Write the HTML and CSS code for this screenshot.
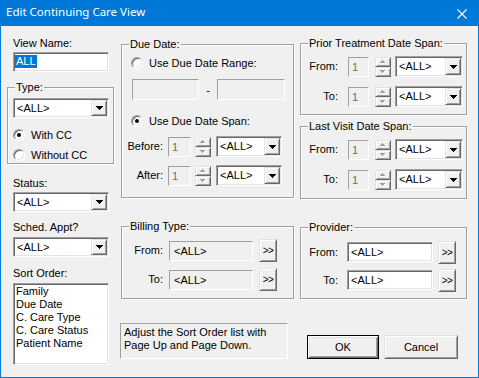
FILE: index.html
```html
<!DOCTYPE html>
<html>
<head>
<meta charset="utf-8">
<link rel="stylesheet" href="styles.css">
</head>
<body>
<div class="window">
  <div class="titlebar">
    <span class="title">Edit Continuing Care View</span>
    <svg class="close" width="10" height="10" viewBox="0 0 10 10"><path d="M0.5 0.5L9.5 9.5M9.5 0.5L0.5 9.5" stroke="#fff" stroke-width="1.1" fill="none"/></svg>
  </div>
  <div class="client">
    <!-- LEFT COLUMN -->
    <div class="col col-left">
      <div class="lbl lbl-view">View Name:</div>
      <div class="edit sunken name-edit"><span class="sel">ALL</span></div>
      <div class="group g-type">
        <span class="glabel">Type:</span>
        <div class="combo combo-left type-combo"><span class="ctext">&lt;ALL&gt;</span><span class="cbtn"><svg width="7" height="4" viewBox="0 0 7 4"><path d="M0 0h7v1h-1v1h-1v1h-1v1h-1v-1h-1v-1h-1v-1h-1z"/></svg></span></div>
        <div class="radio radio-with"><span class="rc on"></span><span>With CC</span></div>
        <div class="radio radio-without"><span class="rc"></span><span>Without CC</span></div>
      </div>
      <div class="lbl lbl-status">Status:</div>
      <div class="combo combo-left status-combo"><span class="ctext">&lt;ALL&gt;</span><span class="cbtn"><svg width="7" height="4" viewBox="0 0 7 4"><path d="M0 0h7v1h-1v1h-1v1h-1v1h-1v-1h-1v-1h-1v-1h-1z"/></svg></span></div>
      <div class="lbl lbl-sched">Sched. Appt?</div>
      <div class="combo combo-left sched-combo"><span class="ctext">&lt;ALL&gt;</span><span class="cbtn"><svg width="7" height="4" viewBox="0 0 7 4"><path d="M0 0h7v1h-1v1h-1v1h-1v1h-1v-1h-1v-1h-1v-1h-1z"/></svg></span></div>
      <div class="lbl lbl-sort">Sort Order:</div>
      <div class="listbox sunken">
        <div>Family</div>
        <div>Due Date</div>
        <div>C. Care Type</div>
        <div>C. Care Status</div>
        <div>Patient Name</div>
      </div>
    </div>

    <!-- MIDDLE COLUMN -->
    <div class="col col-mid">
      <div class="group g-due">
        <span class="glabel">Due Date:</span>
        <div class="radio radio-range"><span class="rc"></span><span>Use Due Date Range:</span></div>
        <div class="row range-row">
          <div class="edit flat range-edit1"></div>
          <span class="dash">-</span>
          <div class="edit flat range-edit2"></div>
        </div>
        <div class="radio radio-span"><span class="rc on"></span><span>Use Due Date Span:</span></div>
        <div class="row span-row span-row1">
          <span class="rlbl mid-lbl">Before:</span>
          <div class="edit flat num-edit mid-num"><span class="dis">1</span></div>
          <div class="spin mid-spin">
            <span class="sbtn"><svg width="6" height="4" viewBox="0 0 6 4"><path fill="#fff" d="M3 1h1v1h1v1h1v1h-5v-1h1v-1h1z"/><path fill="#a0a0a0" d="M2 0h1v1h1v1h1v1h-5v-1h1v-1h1z"/></svg></span>
            <span class="sbtn"><svg width="6" height="4" viewBox="0 0 6 4"><path fill="#fff" d="M1 1h5v1h-1v1h-1v1h-1v-1h-1v-1h-1z"/><path fill="#a0a0a0" d="M0 0h5v1h-1v1h-1v1h-1v-1h-1v-1h-1z"/></svg></span>
          </div>
          <div class="combo mid-combo"><span class="ctext">&lt;ALL&gt;</span><span class="cbtn"><svg width="7" height="4" viewBox="0 0 7 4"><path d="M0 0h7v1h-1v1h-1v1h-1v1h-1v-1h-1v-1h-1v-1h-1z"/></svg></span></div>
        </div>
        <div class="row span-row span-row2">
          <span class="rlbl mid-lbl">After:</span>
          <div class="edit flat num-edit mid-num"><span class="dis">1</span></div>
          <div class="spin mid-spin">
            <span class="sbtn"><svg width="6" height="4" viewBox="0 0 6 4"><path fill="#fff" d="M3 1h1v1h1v1h1v1h-5v-1h1v-1h1z"/><path fill="#a0a0a0" d="M2 0h1v1h1v1h1v1h-5v-1h1v-1h1z"/></svg></span>
            <span class="sbtn"><svg width="6" height="4" viewBox="0 0 6 4"><path fill="#fff" d="M1 1h5v1h-1v1h-1v1h-1v-1h-1v-1h-1z"/><path fill="#a0a0a0" d="M0 0h5v1h-1v1h-1v1h-1v-1h-1v-1h-1z"/></svg></span>
          </div>
          <div class="combo mid-combo"><span class="ctext">&lt;ALL&gt;</span><span class="cbtn"><svg width="7" height="4" viewBox="0 0 7 4"><path d="M0 0h7v1h-1v1h-1v1h-1v1h-1v-1h-1v-1h-1v-1h-1z"/></svg></span></div>
        </div>
      </div>

      <div class="group g-billing">
        <span class="glabel">Billing Type:</span>
        <div class="row pick-row pick-row1">
          <span class="rlbl mid-lbl">From:</span>
          <div class="edit flat bill-edit"><span>&lt;ALL&gt;</span></div>
          <span class="btn small-btn">&gt;&gt;</span>
        </div>
        <div class="row pick-row pick-row2">
          <span class="rlbl mid-lbl">To:</span>
          <div class="edit flat bill-edit"><span>&lt;ALL&gt;</span></div>
          <span class="btn small-btn">&gt;&gt;</span>
        </div>
      </div>

      <div class="info">Adjust the Sort Order list with<br>Page Up and Page Down.</div>
    </div>

    <!-- RIGHT COLUMN -->
    <div class="col col-right">
      <div class="group g-prior">
        <span class="glabel">Prior Treatment Date Span:</span>
        <div class="row span-row rspan-row1">
          <span class="rlbl right-lbl">From:</span>
          <div class="edit flat num-edit right-num"><span class="dis">1</span></div>
          <div class="spin right-spin">
            <span class="sbtn"><svg width="6" height="4" viewBox="0 0 6 4"><path fill="#fff" d="M3 1h1v1h1v1h1v1h-5v-1h1v-1h1z"/><path fill="#a0a0a0" d="M2 0h1v1h1v1h1v1h-5v-1h1v-1h1z"/></svg></span>
            <span class="sbtn"><svg width="6" height="4" viewBox="0 0 6 4"><path fill="#fff" d="M1 1h5v1h-1v1h-1v1h-1v-1h-1v-1h-1z"/><path fill="#a0a0a0" d="M0 0h5v1h-1v1h-1v1h-1v-1h-1v-1h-1z"/></svg></span>
          </div>
          <div class="combo right-combo"><span class="ctext">&lt;ALL&gt;</span><span class="cbtn"><svg width="7" height="4" viewBox="0 0 7 4"><path d="M0 0h7v1h-1v1h-1v1h-1v1h-1v-1h-1v-1h-1v-1h-1z"/></svg></span></div>
        </div>
        <div class="row span-row rspan-row2">
          <span class="rlbl right-lbl">To:</span>
          <div class="edit flat num-edit right-num"><span class="dis">1</span></div>
          <div class="spin right-spin">
            <span class="sbtn"><svg width="6" height="4" viewBox="0 0 6 4"><path fill="#fff" d="M3 1h1v1h1v1h1v1h-5v-1h1v-1h1z"/><path fill="#a0a0a0" d="M2 0h1v1h1v1h1v1h-5v-1h1v-1h1z"/></svg></span>
            <span class="sbtn"><svg width="6" height="4" viewBox="0 0 6 4"><path fill="#fff" d="M1 1h5v1h-1v1h-1v1h-1v-1h-1v-1h-1z"/><path fill="#a0a0a0" d="M0 0h5v1h-1v1h-1v1h-1v-1h-1v-1h-1z"/></svg></span>
          </div>
          <div class="combo right-combo"><span class="ctext">&lt;ALL&gt;</span><span class="cbtn"><svg width="7" height="4" viewBox="0 0 7 4"><path d="M0 0h7v1h-1v1h-1v1h-1v1h-1v-1h-1v-1h-1v-1h-1z"/></svg></span></div>
        </div>
      </div>

      <div class="group g-last">
        <span class="glabel">Last Visit Date Span:</span>
        <div class="row span-row rspan-row1">
          <span class="rlbl right-lbl">From:</span>
          <div class="edit flat num-edit right-num"><span class="dis">1</span></div>
          <div class="spin right-spin">
            <span class="sbtn"><svg width="6" height="4" viewBox="0 0 6 4"><path fill="#fff" d="M3 1h1v1h1v1h1v1h-5v-1h1v-1h1z"/><path fill="#a0a0a0" d="M2 0h1v1h1v1h1v1h-5v-1h1v-1h1z"/></svg></span>
            <span class="sbtn"><svg width="6" height="4" viewBox="0 0 6 4"><path fill="#fff" d="M1 1h5v1h-1v1h-1v1h-1v-1h-1v-1h-1z"/><path fill="#a0a0a0" d="M0 0h5v1h-1v1h-1v1h-1v-1h-1v-1h-1z"/></svg></span>
          </div>
          <div class="combo right-combo"><span class="ctext">&lt;ALL&gt;</span><span class="cbtn"><svg width="7" height="4" viewBox="0 0 7 4"><path d="M0 0h7v1h-1v1h-1v1h-1v1h-1v-1h-1v-1h-1v-1h-1z"/></svg></span></div>
        </div>
        <div class="row span-row rspan-row2">
          <span class="rlbl right-lbl">To:</span>
          <div class="edit flat num-edit right-num"><span class="dis">1</span></div>
          <div class="spin right-spin">
            <span class="sbtn"><svg width="6" height="4" viewBox="0 0 6 4"><path fill="#fff" d="M3 1h1v1h1v1h1v1h-5v-1h1v-1h1z"/><path fill="#a0a0a0" d="M2 0h1v1h1v1h1v1h-5v-1h1v-1h1z"/></svg></span>
            <span class="sbtn"><svg width="6" height="4" viewBox="0 0 6 4"><path fill="#fff" d="M1 1h5v1h-1v1h-1v1h-1v-1h-1v-1h-1z"/><path fill="#a0a0a0" d="M0 0h5v1h-1v1h-1v1h-1v-1h-1v-1h-1z"/></svg></span>
          </div>
          <div class="combo right-combo"><span class="ctext">&lt;ALL&gt;</span><span class="cbtn"><svg width="7" height="4" viewBox="0 0 7 4"><path d="M0 0h7v1h-1v1h-1v1h-1v1h-1v-1h-1v-1h-1v-1h-1z"/></svg></span></div>
        </div>
      </div>

      <div class="group g-provider">
        <span class="glabel">Provider:</span>
        <div class="row pick-row prov-row1">
          <span class="rlbl right-lbl">From:</span>
          <div class="edit sunken prov-edit"><span>&lt;ALL&gt;</span></div>
          <span class="btn small-btn prov-btn">&gt;&gt;</span>
        </div>
        <div class="row pick-row prov-row2">
          <span class="rlbl right-lbl">To:</span>
          <div class="edit sunken prov-edit"><span>&lt;ALL&gt;</span></div>
          <span class="btn small-btn prov-btn">&gt;&gt;</span>
        </div>
      </div>

      <div class="row dlg-buttons">
        <span class="btn default-btn ok-btn">OK</span>
        <span class="btn cancel-btn">Cancel</span>
      </div>
    </div>
  </div>
</div>
</body>
</html>
```

FILE: styles.css
```css
* { box-sizing: border-box; }

body {
  margin: 0;
  font-family: "Liberation Sans", Arial, sans-serif;
  font-size: 11px;
  line-height: 13px;
  color: #000;
}

.window {
  width: 479px;
  height: 378px;
  background: #0078d7;
  padding: 0 1px 1px;
  display: flex;
  flex-direction: column;
}

.titlebar {
  height: 26px;
  flex: none;
  display: flex;
  align-items: flex-start;
  padding: 4px 0 0 5px;
  color: #fff;
  font-family: "Noto Sans", sans-serif;
  font-size: 11.5px;
  line-height: 16px;
}
.title { flex: 1; }
.close { margin: 5px 11px 0 0; }

.client {
  flex: 1;
  background: #f0f0f0;
  display: flex;
  align-items: flex-start;
}

.col { display: flex; flex-direction: column; align-items: flex-start; }
.col-left { margin-left: 6px; width: 107px; }
.col-mid { margin-left: 6px; width: 174px; }
.col-right { margin-left: 6px; width: 167px; }

.row { display: flex; align-items: flex-start; }

/* ---------- basic controls ---------- */
.lbl { margin-left: 6px; height: 13px; white-space: nowrap; }

.sunken {
  background: #fff;
  border: 1px solid;
  border-color: #a0a0a0 #fff #fff #a0a0a0;
  box-shadow: inset 1px 1px 0 #696969, inset -1px -1px 0 #e3e3e3;
}

.flat {
  background: #f0f0f0;
  border: 1px solid;
  border-color: #a0a0a0 #fff #fff #a0a0a0;
}

.edit {
  display: flex;
  align-items: center;
  white-space: nowrap;
}

.combo {
  display: flex;
  background: #fff;
  border: 1px solid;
  border-color: #a0a0a0 #fff #fff #a0a0a0;
  box-shadow: inset 1px 1px 0 #696969, inset -1px -1px 0 #e3e3e3;
  padding: 1px;
}
.ctext {
  flex: 1;
  display: flex;
  align-items: center;
  padding-left: 2px;
  white-space: nowrap;
}
.cbtn {
  width: 16px;
  background: #f0f0f0;
  border: 1px solid;
  border-color: #e3e3e3 #696969 #696969 #e3e3e3;
  box-shadow: inset 1px 1px 0 #fff, inset -1px -1px 0 #a0a0a0;
  display: flex;
  align-items: center;
  justify-content: center;
}
.cbtn svg { display: block; fill: #000; margin-left: 1px; }

.btn {
  display: flex;
  align-items: center;
  justify-content: center;
  background: #f0f0f0;
  border: 1px solid;
  border-color: #e3e3e3 #696969 #696969 #e3e3e3;
  box-shadow: inset 1px 1px 0 #fff, inset -1px -1px 0 #a0a0a0;
  white-space: nowrap;
}

.spin { display: flex; flex-direction: column; width: 16px; height: 20px; }
.sbtn {
  height: 10px;
  display: flex;
  align-items: center;
  justify-content: center;
  background: #f0f0f0;
  border: 1px solid;
  border-color: #e3e3e3 #696969 #696969 #e3e3e3;
  box-shadow: inset 1px 1px 0 #fff, inset -1px -1px 0 #a0a0a0;
}
.sbtn svg { display: block; }

.radio { display: flex; align-items: center; height: 14px; white-space: nowrap; }
.rc {
  position: relative;
  width: 12px;
  height: 12px;
  flex: none;
  border-radius: 50%;
  background: #fff;
  border: 1px solid;
  border-color: #a0a0a0 #fff #fff #a0a0a0;
  box-shadow: inset 1px 1px 0 #696969, inset -1px -1px 0 #e3e3e3;
  margin-right: 6px;
}
.rc.on::after {
  content: "";
  position: absolute;
  left: 3px;
  top: 3px;
  width: 4px;
  height: 4px;
  border-radius: 50%;
  background: #000;
}

.group {
  position: relative;
  border: 1px solid #a0a0a0;
  box-shadow: inset 1px 1px 0 #fff, 1px 1px 0 #fff;
  display: flex;
  flex-direction: column;
  align-items: flex-start;
}
.glabel {
  position: absolute;
  left: 7px;
  top: -7px;
  padding: 0 1px;
  background: #f0f0f0;
  white-space: nowrap;
}

.rlbl { text-align: right; white-space: nowrap; align-self: center; }

.dis { color: #6d6d6d; padding-left: 1px; }

/* ---------- left column ---------- */
.lbl-view { margin-top: 11px; }
.name-edit { width: 96px; height: 20px; margin: 2px 0 0 6px; padding: 1px 0 0 1px; align-items: flex-start; }
.sel {
  display: inline-block;
  height: 13px;
  margin-top: 1px;
  padding: 0 1px 0 1px;
  background: #0078d7;
  color: #fff;
}

.g-type { width: 107px; height: 77px; margin-top: 15px; }
.combo-left { width: 96px; height: 20px; }
.type-combo { margin: 10px 0 0 5px; }
.radio-with { margin: 10px 0 0 5px; }
.radio-without { margin: 6px 0 0 5px; }

.lbl-status { margin-top: 13px; }
.status-combo { margin: 2px 0 0 6px; }
.lbl-sched { margin-top: 9px; }
.sched-combo { margin: 3px 0 0 6px; }
.lbl-sort { margin-top: 10px; }
.listbox {
  width: 96px;
  height: 82px;
  margin: 3px 0 0 6px;
  padding: 1px 2px;
  white-space: nowrap;
}

/* ---------- middle column ---------- */
.g-due { width: 173px; height: 154px; margin: 18px 0 0 1px; }
.radio-range { margin: 11px 0 0 9px; }
.range-row { margin: 9px 0 0 10px; }
.range-edit1 { width: 67px; height: 21px; }
.range-edit2 { width: 68px; height: 21px; }
.dash { width: 18px; text-align: center; padding-top: 5px; }
.radio-span { margin: 14px 0 0 9px; }
.span-row1 { margin-top: 8px; }
.span-row2 { margin-top: 8px; }
.mid-lbl { width: 41px; }
.num-edit { height: 20px; margin-top: 1px; padding-left: 2px; }
.mid-num { width: 23px; margin-left: 5px; }
.mid-spin { margin: 1px 0 0 4px; }
.mid-combo { width: 66px; height: 21px; margin-left: 5px; }

.g-billing { width: 173px; height: 73px; margin: 28px 0 0 1px; }
.pick-row1 { margin-top: 12px; }
.pick-row2 { margin-top: 6px; }
.bill-edit { width: 84px; height: 20px; margin: 2px 0 0 6px; padding-left: 4px; }
.small-btn { width: 18px; height: 23px; margin-left: 6px; font-size: 10px; letter-spacing: -0.5px; }

.info {
  width: 168px;
  height: 36px;
  margin-top: 24px;
  border: 1px solid;
  border-color: #a0a0a0 #fff #fff #a0a0a0;
  padding: 2px 3px;
  white-space: nowrap;
}

/* ---------- right column ---------- */
.g-prior { width: 167px; height: 72px; margin-top: 17px; }
.g-last { width: 167px; height: 73px; margin-top: 11px; }
.rspan-row1 { margin-top: 12px; }
.rspan-row2 { margin-top: 9px; }
.right-lbl { width: 37px; }
.right-num { width: 21px; margin-left: 10px; }
.right-spin { margin: 1px 0 0 6px; }
.right-combo { width: 68px; height: 21px; margin-left: 4px; }

.g-provider { width: 167px; height: 72px; margin-top: 28px; }
.prov-row1 { margin-top: 13px; }
.prov-row2 { margin-top: 5px; }
.prov-edit { width: 86px; height: 20px; margin: 1px 0 0 9px; padding-left: 3px; }
.prov-btn { margin-left: 5px; }

.dlg-buttons { margin: 36px 0 0 7px; }
.ok-btn, .cancel-btn { height: 24px; }
.ok-btn {
  width: 72px;
  border: 1px solid #000;
  box-shadow: inset 1px 1px 0 #fff, inset -1px -1px 0 #696969, inset 2px 2px 0 #e3e3e3, inset -2px -2px 0 #a0a0a0;
}
.cancel-btn { width: 74px; margin-left: 5px; }
```
